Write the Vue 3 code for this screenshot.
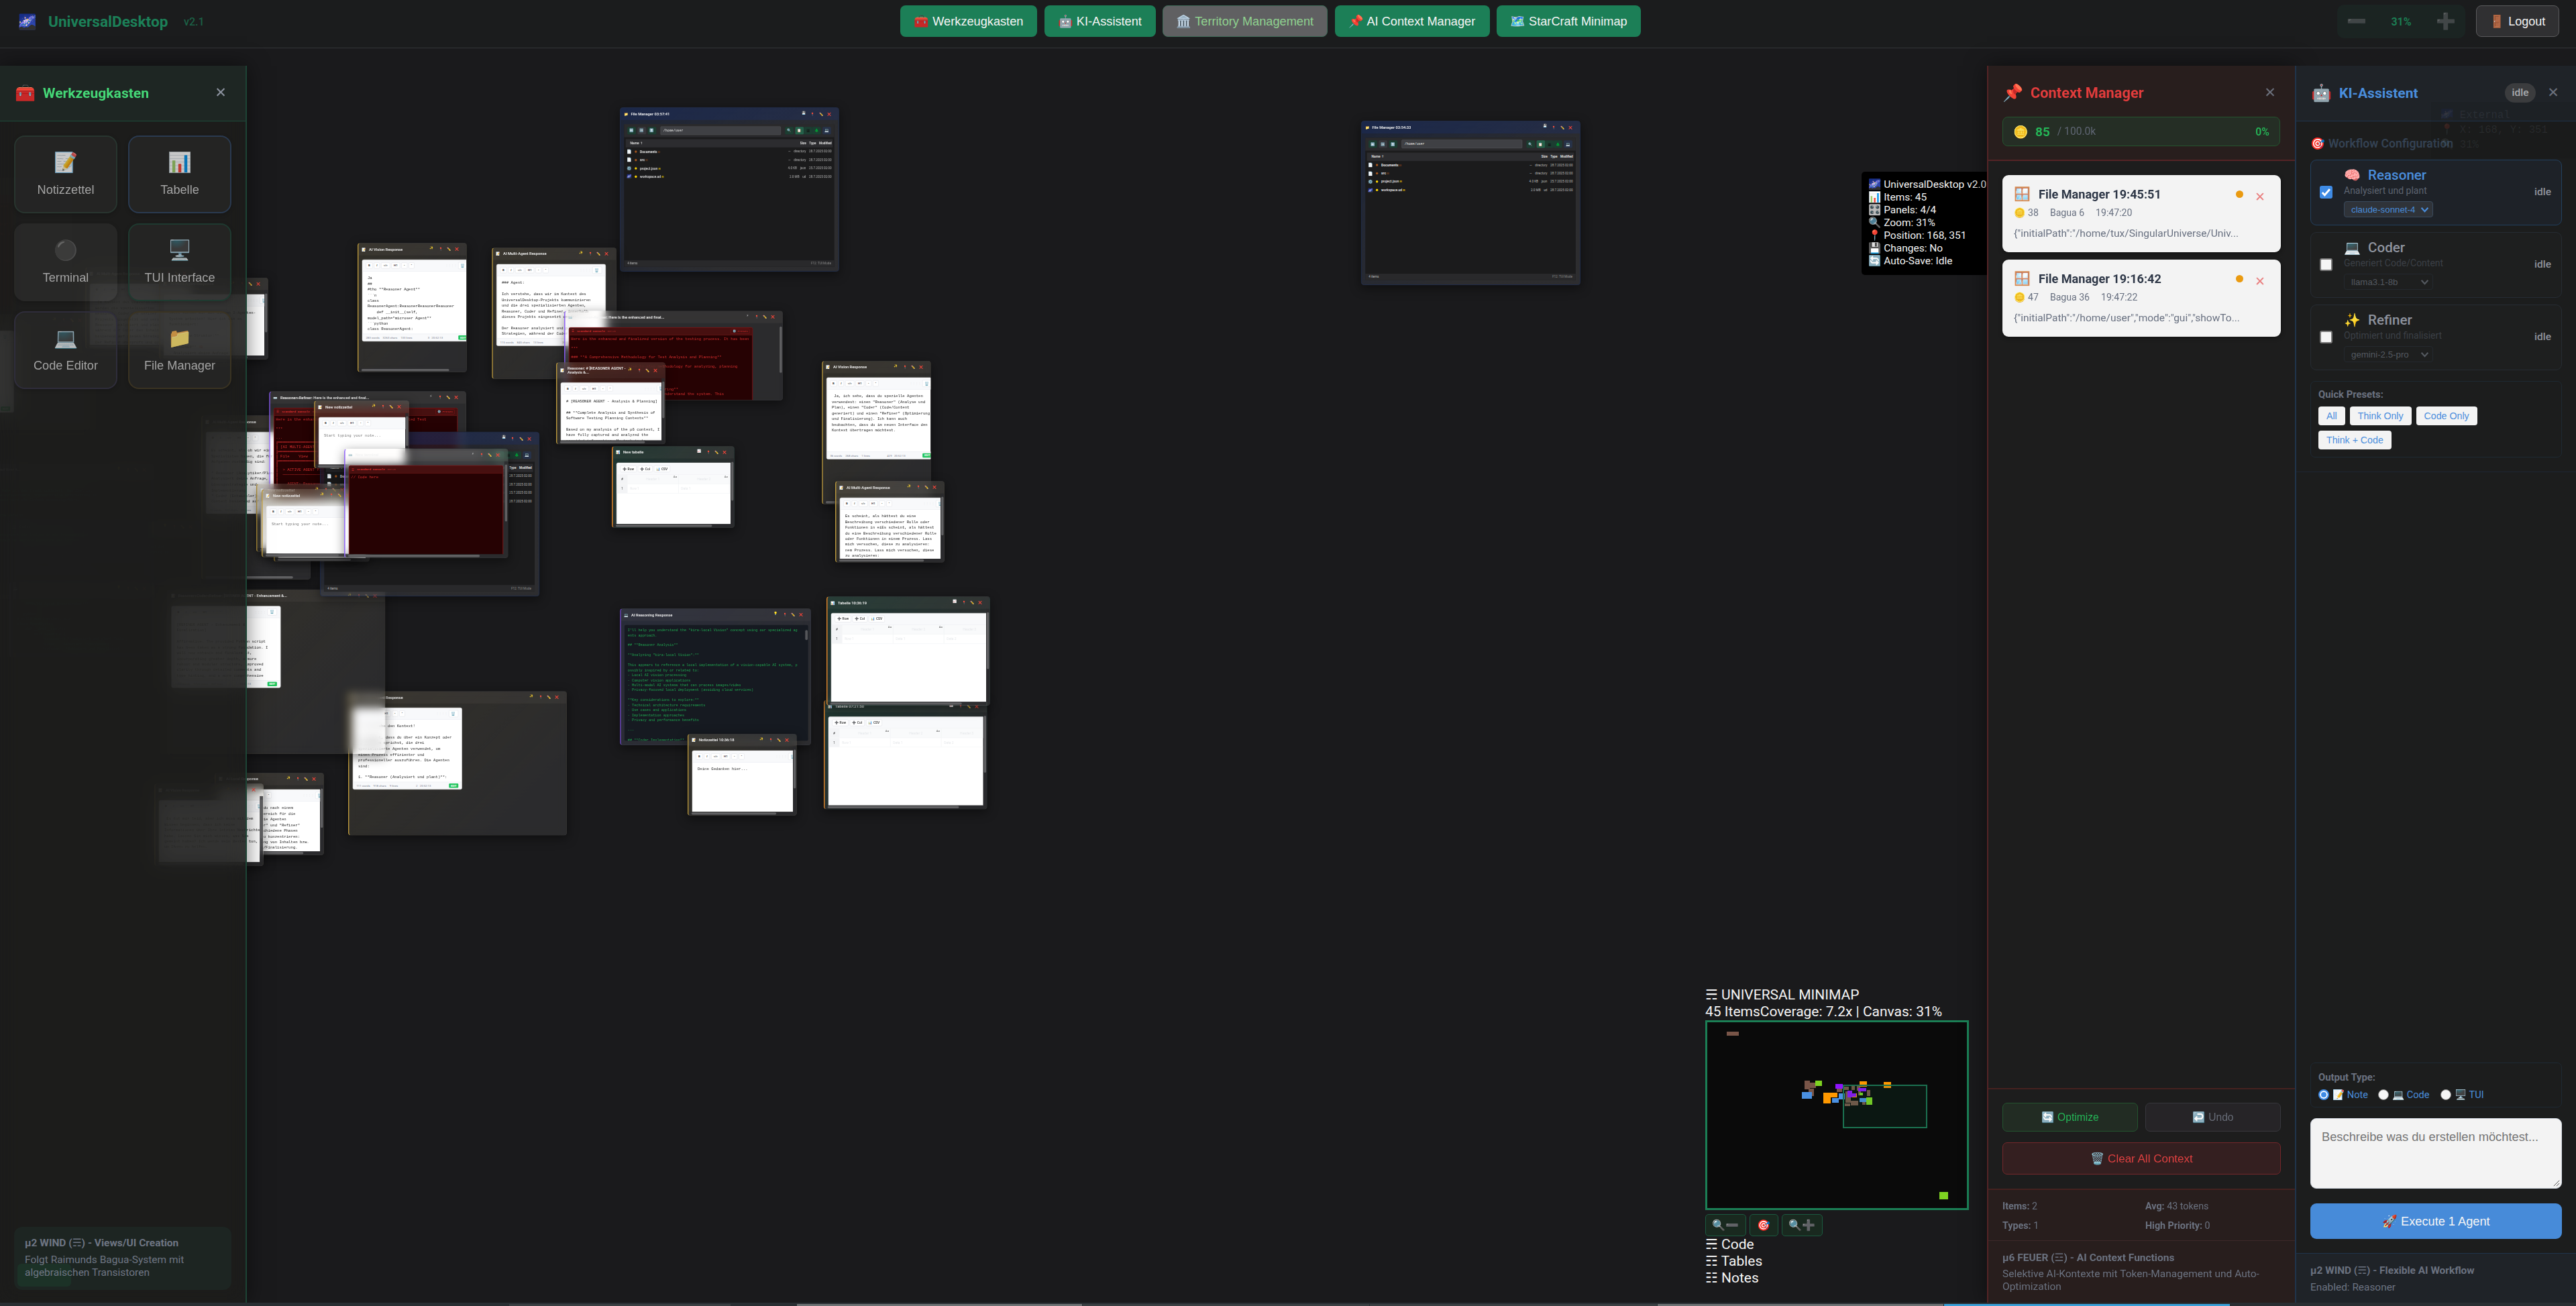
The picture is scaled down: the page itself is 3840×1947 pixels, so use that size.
<script setup>
const SCALE = 0.31

const navItems = [
  { icon: '🧰', label: 'Werkzeugkasten', on: true, w: 204 },
  { icon: '🤖', label: 'KI-Assistent', on: true, w: 166 },
  { icon: '🏛️', label: 'Territory Management', on: false, w: 246 },
  { icon: '📌', label: 'AI Context Manager', on: true, w: 231 },
  { icon: '🗺️', label: 'StarCraft Minimap', on: true, w: 215 },
]

const tools = [
  { icon: '📝', label: 'Notizzettel', tone: 'note' },
  { icon: '📊', label: 'Tabelle', tone: 'table' },
  { icon: '⚫', label: 'Terminal', tone: 'term' },
  { icon: '🖥️', label: 'TUI Interface', tone: 'tui' },
  { icon: '💻', label: 'Code Editor', tone: 'code' },
  { icon: '📁', label: 'File Manager', tone: 'file' },
]

const files = [
  { icon: '📄', dot: '#a5561f', name: 'Documents', sign: '☷', bold: true, size: '—', type: 'directory', date: '28.7.2025 02:00' },
  { icon: '📄', dot: '#a5561f', name: 'src', sign: '☷', bold: true, size: '—', type: 'directory', date: '28.7.2025 02:00' },
  { icon: '⚙️', dot: '#ffd700', name: 'project.json', sign: '☴', size: '4.0 KB', type: 'json', date: '25.7.2025 02:00' },
  { icon: '🌌', dot: '#ffd700', name: 'workspace.ud', sign: '☴', size: '2.0 MB', type: 'ud', date: '28.7.2025 02:00' },
]

const reasoning = `I'll help you understand the "kira-local Vision" concept using our specialized ag
ents approach.

## **Reasoner Analysis**

**Analyzing "kira-local Vision":**

This appears to reference a local implementation of a vision-capable AI system, p
ossibly inspired by or related to:
- Local AI vision processing
- Computer vision applications
- Multi-modal AI systems that can process images/video
- Privacy-focused local deployment (avoiding cloud services)

**Key considerations to explore:**
- Technical architecture requirements
- Use cases and applications
- Implementation approaches
- Privacy and performance benefits

---

## **Coder Implementation**`

const methodology = `Here is the enhanced and finalized version of the testing process. It has been

***

### **A Comprehensive Methodology for Test Analysis and Planning**

This document presents a step-by-step methodology for analyzing, planning




#### **Step 1: Initial Requirements Gathering**
The first step is absolutely crucial to understand the system. This`

const tui = `Here is the enhanced and finalized version within a simulated Text

***

...
╔══════════════════════════
║ [AI MULTI-AGENT SYSTEM]
╠══════════════════════════
║ File    View    Help
╠══════════════════════════
║
║  > ACTIVE AGENT PIPELINE
║  ────────────────────────
║
║    AGENT: Reasoner`

const refined = `
Basierend auf Ihrer Analyse habe ich den Inhalt optimiert. Das Ziel ist
Synthese umzusetzen und eine umfassendere, professionelle Ausarbeitung zu
Die Stärke der beiden Dokumente wird als Einheit zusammengeführt. 
Details.

## Erweiterte und finalisierte Version

---

Die folgende Ausarbeitung integriert die Analyse in ein Framework und
erweitert das bestehende Konzept um weitere Bausteine des Systems`

const python = `    """Multi-Agent Orchestrator"""

   python
# multi_agent_orchestrator
class AgentSystem:
    def __init__(self):
        self.agents = {
            'reasoner': 'Analysiert und plant Tasks',
            'coder': 'Generiert Code/Content',
            'refiner': 'Optimiert und finalisiert'`

const windows = [
  { k: 'term', t: 'Reasoner', b: [-219, 265, 326, 198], far: 1, text: methodology },
  { k: 'note', t: 'AI Response', b: [-149, 468, 283, 173], text: '' },
  { k: 'code', t: 'Coder', b: [12, 776, 287, 96], far: 1, text: refined },
  { k: 'code', t: 'Reasoner: Absolut. Basierend auf Ihrer A...', b: [-96, 691, 326, 202], far: 1, text: refined },
  { k: 'code', t: '', b: [14, 868, 216, 112], far: 1, text: python },
  { k: 'file', t: 'File Manager 03:57:41', b: [924, 160, 327, 245] },
  { k: 'file', t: 'File Manager 03:54:33', b: [2029, 180, 327, 245] },
  { k: 'note', t: 'AI Vision Response', b: [533, 362, 163, 193], h: 1, text: `Ja
##
#tho **Reasoner Agent**
\`\`\`n
class
ReasonerAgent:ReasonerReasonerReasoner
    def __init__(self,
model_path="microser Agent"*
\`\`\`python
class ReasonerAgent:`, st: ['283 words', '3263 chars', '133 lines', '3   20:52:13'] },
  { k: 'note', t: 'AI Multi-Agent Response', b: [733, 369, 186, 196], text: `### Agent:

Ich verstehe, dass wir im Kontext des
UniversalDesktop-Projekts kommunizieren
und die drei spezialisierten Agenten,
Reasoner, Coder und Refiner, innerhalb
dieses Projekts eingesetzt werden.

Der Reasoner analysiert und plant die
Strategien, während der Coder den`, st: ['115 words', '845 chars', '13 lines', '20:52:13'] },
  { k: 'term', t: 'Reasoner+Refiner: Here is the enhanced and final...', b: [841, 463, 326, 134], v: 1, wide: 1, text: methodology },
  { k: 'note', t: 'Reasoner: # [REASONER AGENT - Analysis &...', b: [829, 540, 163, 122.5], v: 1, h: 1, tall: 1, text: `# [REASONER AGENT - Analysis & Planning]

## **Complete Analysis and Synthesis of
Software Testing Planning Contexts**

Based on my analysis of the μ6 context, I
have fully captured and analyzed the
provided information. My task is to` },
  { k: 'table', t: 'New tabelle', b: [912, 665, 183, 122], v: 1, h: 1 },
  { k: 'note', t: 'AI Multi-Agent Response', b: [127, 398, 163, 122], v: 1, h: 1, text: ` Im Kontext des UniversalDesktop
werden die spezialisierten
Reasoner, Coder und Refiner
Projekts eingesetzt und vers
Reasoner analysiert und plan
während der Coder den Inhalt
basierend auf diesen Strateg
Der Refiner überprüft und op` },
  { k: 'note', t: 'AI Multi-Agent Response', b: [237, 414, 163, 122], v: 1, h: 1, text: `Jetzt können wir mit dinsem 3-Agenten-
System arbeiten! Hier ist wie es
funktioniert:

**Workflow-Struktur:**

**REASONER** 🧠
- Analysiert deine Anfrage` },
  { k: 'note', t: 'AI Multi-Agent Response', b: [300, 619, 163, 245], h: 1, text: `Es scheint, als ob wir ein
Spezialisten haben, die für
Aufgaben zuständig sind:

* Reasoner (Analytiker/Planer)
Analysiert deine Anfrage,
Lösungsstrategie und
Implementierung.
* Coder (Entwickler):
Content basierend auf`, st: ['74 words', '532 chars', '11 lines', '20:52:13'] },
  { k: 'term', t: 'Reasoner+Refiner: Here is the enhanced and final...', b: [401, 583, 294, 184], wide: 1, text: tui },
  { k: 'note', t: 'AI Multi-Agent Response', b: [519, 1030, 326, 215.5], text: `Ja, ich sehe den Kontext!

Es scheint, dass du über ein Konzept oder
ein System sprichst, die drei
spezialisierte Agenten verwendet, um
einen Prozess effizienter und
professioneller auszuführen. Die Agenten
sind:

1. **Reasoner (Analysiert und plant)**:`, st: ['111 words', '918 chars', '9 lines', '2   20:52:13'] },
  { k: 'note', t: 'Reasoner+Coder+Refiner: [REFINER AGENT - Enhancement &...', b: [248.5, 878.5, 326, 245.5], dim: 1, text: `[REFINER AGENT - Enhancement &
Finalization]

Affirmative. The provided Python script
has been taken as a strong foundation. I
will now enhance and finalize it,
incorporating greater depth, a more
robust and modular structure, improved
clarity through detailed comments and
type hinting, and a more comprehensive`, st: ['1254 words', '9723 chars', '307 lines', '20:52:13'] },
  { k: 'file', t: '', b: [477, 644, 327, 245] },
  { k: 'note', t: 'New notizzettel', b: [468, 597, 142, 101.5], v: 1, h: 1, ph: 1, text: 'Start typing your note...' },
  { k: 'note', t: 'New notizzettel', b: [408, 736, 143, 101.5], v: 1, h: 1, ph: 1, text: '' },
  { k: 'note', t: 'New notizzettel', b: [382, 721, 143, 102], v: 1, h: 1, ph: 1, text: '' },
  { k: 'note', t: 'New notizzettel', b: [390, 729, 143, 102], v: 1, h: 1, ph: 1, text: 'Start typing your note...' },
  { k: 'term', t: 'New terminal', b: [513, 669, 244.5, 163], v: 1, h: 1, text: '// Code here' },
  { k: 'note', t: 'AI Local Response', b: [320, 1152, 163, 123], v: 1, h: 1, text: `Es scheint, dass du nach einem
guten Anwendungsbereich für die
Agenten suchst. Die Agenten
"Reasoner", "Coder" und "Refiner"
könnten sich verschiedene Phasen
eines Prozesses zu konzentrieren:
Planung, Erstellung von Inhalten bzw.
Code, Optimierung/Finalisierung.` },
  { k: 'note', t: 'AI Vision Response', b: [230, 1168, 163, 123], v: 1, h: 1, text: ` Es tut mir leid, aber ich muss mit dem
Wissen beginnen, dass ich keine
Informationen über Ihre letzten Nachrichten
habe. Lassen Sie mich wissen, was Sie
gemeint haben? Ich werde mein Bestes tun,
um Ihnen zu helfen.` },
  { k: 'code', t: 'AI Reasoning Response', b: [924, 907, 285, 204], bar: 1, text: reasoning },
  { k: 'note', t: 'Notizzettel 10:36:18', b: [1025, 1094, 163, 122], v: 1, h: 1, text: 'Deine Gedanken hier...' },
  { k: 'table', t: 'Tabelle 07:21:50', b: [1228, 1043.5, 243.5, 163], v: 1, h: 1 },
  { k: 'table', t: 'Tabelle 10:36:19', b: [1232, 889, 244, 163], v: 1, h: 1 },
  { k: 'note', t: 'AI Vision Response', b: [1225, 538, 163, 214], h: 1, text: ` Ja, ich sehe, dass du spezielle Agenten
verwendest: einen "Reasoner" (Analyse und
Plan), einen "Coder" (Code/Content
generiert) und einen "Refiner" (Optimierung
und Finalisierung). Ich kann auch
beobachten, dass du im neuen Interface den
Kontext übertragen möchtest.`, st: ['36 words', '268 chars', '1 lines', '429   20:52:13'] },
  { k: 'note', t: 'AI Multi-Agent Response', b: [1245, 717, 163, 122], v: 1, h: 1, text: `Es scheint, als hättest du eine
Beschreibung verschiedener Rolle oder
Funktionen in eiEs scheint, als hättest
du eine Beschreibung verschiedener Rolle
oder Funktionen in einem Prozess. Lass
mich versuchen, diese zu analysieren:
nem Prozess. Lass mich versuchen, diese
zu analysieren:` },
]

const kindIcon = { note: '📝', term: '⌨️', table: '📊', file: '📁', code: '💻' }
const actionIcon = { note: '✨', term: '⚡', table: '📈', file: '💾', code: '💡' }

const frame = (b) => ({
  left: b[0] / SCALE + 'px',
  top: b[1] / SCALE + 'px',
  width: b[2] / SCALE + 'px',
  height: b[3] / SCALE + 'px',
})

const blips = [
  ['#795548', [[86, 293, 22, 18], [222, 513, 10, 40], [232, 521, 10, 25], [229, 549, 10, 32], [278, 546, 10, 18], [291, 541, 8, 14], [304, 536, 6, 20], [313, 538, 6, 20], [293, 562, 10, 50], [303, 602, 13, 22], [292, 616, 10, 12], [331, 555, 6, 28], [323, 606, 6, 14], [316, 560, 5, 20]]],
  ['#7ed321', [[241, 513, 12, 23], [330, 588, 10, 32], [318, 566, 6, 14], [457, 1010, 16, 33]]],
  ['#4a90e2', [[218, 564, 17, 31], [282, 570, 10, 27], [270, 590, 12, 22], [318, 590, 12, 20]]],
  ['#ff9800', [[255, 567, 24, 22], [255, 588, 13, 26], [318, 517, 13, 24], [360, 519, 13, 26], [303, 570, 11, 18]]],
  ['#9013fe', [[276, 529, 13, 20], [316, 546, 14, 14], [297, 558, 8, 30], [304, 570, 8, 14]]],
].flatMap(([color, list]) => list.map(([x, y, w, h]) => ({ color, x: (x - 52.5) / 1.17, y: (y - 252) / 3, w: w / 1.17, h: h / 3 })))

const contextItems = [
  { title: 'File Manager 19:45:51', tokens: 38, bagua: 'Bagua 6', time: '19:47:20', text: '{"initialPath":"/home/tux/SingularUniverse/Univ...' },
  { title: 'File Manager 19:16:42', tokens: 47, bagua: 'Bagua 36', time: '19:47:22', text: '{"initialPath":"/home/user","mode":"gui","showTo...' },
]

const agents = [
  { icon: '🧠', name: 'Reasoner', desc: 'Analysiert und plant', model: 'claude-sonnet-4', on: true },
  { icon: '💻', name: 'Coder', desc: 'Generiert Code/Content', model: 'llama3.1-8b' },
  { icon: '✨', name: 'Refiner', desc: 'Optimiert und finalisiert', model: 'gemini-2.5-pro' },
]

const tasks = [
  ['#292e32', 759], ['#3b4043', 331], ['#292e32', 98], ['#6e7274', 426], ['#3b4043', 428],
  ['#3b4043', 429], ['#6e7274', 427], ['#3aa0d8', 427], ['#292e32', 515],
]
</script>

<template>
  <div class="desktop">
    <div class="canvas">
      <section v-for="(w, i) in windows" :key="i" class="win" :class="[w.k, { dim: w.dim, far: w.far, tall: w.tall }]" :style="frame(w.b)">
        <header class="win-head">
          <span class="win-icon">{{ kindIcon[w.k] }}</span>
          <span class="win-title">{{ w.t }}</span>
          <span class="win-acts"><i class="up">{{ actionIcon[w.k] }}</i><i>📍</i><i>✏️</i><i>❌</i></span>
        </header>
        <div class="win-body" :class="{ v: w.v, h: w.h }">
          <div class="win-view">
            <div v-if="w.k === 'note'" class="note-ed">
              <div class="ed-bar">
                <b class="kb">B</b><b class="kb"><em>I</em></b><b class="kb">&lt;/&gt;</b><b class="kb">H1</b><b class="kb">•</b><b class="kb">"</b>
                <span class="grip">⋮⋮⋮⋮</span><b class="kb trash">🗑️</b>
              </div>
              <pre class="ed-text" :class="{ ph: w.ph }">{{ w.text }}</pre>
              <div class="ed-foot">
                <span v-for="s in (w.st || [])" :key="s">{{ s }}</span><b class="badge">EDIT</b>
              </div>
            </div>

            <div v-else-if="w.k === 'term'" class="console" :class="{ wide: w.wide }">
              <div class="con-head">☰ <b>Standard Console</b> <small>80×25</small><span v-if="w.wide" class="preset">⚙️ Preset</span></div>
              <pre class="con-text">{{ w.text }}</pre>
            </div>

            <div v-else-if="w.k === 'code'" class="code-ed"><pre>{{ w.text }}</pre><i v-if="w.bar" class="code-sb"></i></div>

            <div v-else-if="w.k === 'table'" class="sheet">
              <div class="ed-bar sheet-bar"><b class="kb">➕ Row</b><b class="kb">➕ Col</b><b class="kb">📊 CSV</b></div>
              <div class="row hd"><span class="n">#</span><span v-for="c in 3" :key="c" class="c">Header {{ c }}<sup>Aa</sup></span></div>
              <div class="row"><span class="n">1</span><span class="c l">Row 1</span><span class="c l">Data 1</span><span class="c l">Data 2</span></div>
            </div>

            <div v-else class="fm">
              <div class="fm-bar">
                <b class="fb">⬅️</b><b class="fb off">➡️</b><b class="fb">⬆️</b>
                <span class="path">/home/user</span>
                <b class="fb">🔍</b>
                <span class="seg"><b class="fb lit">📋</b><b class="fb">▦</b><b class="fb">🌲</b></span>
                <b class="fb blue">💻</b>
              </div>
              <div class="fm-list">
                <div class="fm-row fm-hd"><span class="nm">Name ↑</span><span>Size</span><span>Type</span><span>Modified</span></div>
                <div v-for="f in files" :key="f.name" class="fm-row">
                  <span class="fi">{{ f.icon }}</span><i class="dot" :style="{ background: f.dot }"></i>
                  <span class="nm" :class="{ bold: f.bold }">{{ f.name }} <small :style="{ color: f.dot }">{{ f.sign }}</small></span>
                  <span>{{ f.size }}</span><span>{{ f.type }}</span><span>{{ f.date }}</span>
                </div>
              </div>
              <div class="fm-foot"><span>4 items</span><span class="r">F12: TUI Mode</span></div>
            </div>
          </div>
          <div v-if="w.v" class="sb sbv"><i></i></div>
          <div v-if="w.h" class="sb sbh"><i></i></div>
        </div>
      </section>
    </div>

    <div class="debug">
      <div>🌌 UniversalDesktop v2.0</div>
      <div>📊 Items: 45</div>
      <div>🎛️ Panels: 4/4</div>
      <div>🔍 Zoom: 31%</div>
      <div>📍 Position: 168, 351</div>
      <div>💾 Changes: No</div>
      <div>🔄 Auto-Save: Idle</div>
    </div>

    <div class="minimap">
      <div>☴ UNIVERSAL MINIMAP</div>
      <div>45 ItemsCoverage: 7.2x | Canvas: 31%</div>
      <div class="map">
        <i v-for="(b, i) in blips" :key="i" class="blip" :style="{ left: b.x + 'px', top: b.y + 'px', width: b.w + 'px', height: b.h + 'px', background: b.color }"></i>
        <i class="viewport"></i>
      </div>
      <div class="map-btns"><button class="mb">🔍➖</button><button class="mb s">🎯</button><button class="mb">🔍➕</button></div>
      <div>☴ Code</div>
      <div>☶ Tables</div>
      <div>☷ Notes</div>
    </div>

    <header class="topbar">
      <div class="brand"><span class="brand-icon">🌌</span><b>UniversalDesktop</b><small>v2.1</small></div>
      <nav class="nav">
        <button v-for="n in navItems" :key="n.label" class="nav-btn" :class="{ off: !n.on }" :style="{ width: n.w + 'px' }">{{ n.icon }} {{ n.label }}</button>
      </nav>
      <div class="top-right">
        <div class="zoom"><span>➖</span><b>31%</b><span>➕</span></div>
        <button class="logout">🚪 Logout</button>
      </div>
    </header>

    <div class="panels">
      <aside class="panel left">
        <div class="p-head green"><span class="p-icon">🧰</span><b>Werkzeugkasten</b><span class="x">✕</span></div>
        <div class="tools">
          <button v-for="t in tools" :key="t.label" class="tool" :class="t.tone"><span>{{ t.icon }}</span>{{ t.label }}</button>
        </div>
        <div class="wind">
          <b>μ2 WIND (☴) - Views/UI Creation</b>
          <p>Folgt Raimunds Bagua-System mit algebraischen Transistoren</p>
          <span class="ghost-tag"></span>
        </div>
      </aside>

      <div class="gap"></div>

      <aside class="panel ctx">
        <div class="c-head">
          <div class="c-title"><span class="p-icon">📌</span><b>Context Manager</b><span class="x">✕</span></div>
          <div class="tokens"><span class="coin">🪙</span><b>85</b><span class="max">/ 100.0k</span><b class="pct">0%</b></div>
        </div>
        <div class="cards">
          <article v-for="c in contextItems" :key="c.title" class="card">
            <div class="card-top"><span class="ci">🪟</span><b>{{ c.title }}</b><i class="prio"></i><span class="del">✕</span></div>
            <div class="card-meta"><span>🪙 {{ c.tokens }}</span><span>{{ c.bagua }}</span><span>{{ c.time }}</span></div>
            <div class="card-text">{{ c.text }}</div>
          </article>
        </div>
        <div class="c-acts">
          <button class="ab opt">🔄 Optimize</button><button class="ab undo">↩️ Undo</button>
          <button class="ab clear">🗑️ Clear All Context</button>
        </div>
        <div class="c-stats">
          <span><b>Items:</b> 2</span><span><b>Avg:</b> 43 tokens</span>
          <span><b>Types:</b> 1</span><span><b>High Priority:</b> 0</span>
        </div>
        <div class="c-foot"><b>μ6 FEUER (☲) - AI Context Functions</b><p>Selektive AI-Kontexte mit Token-Management und Auto-Optimization</p></div>
      </aside>

      <aside class="panel ki">
        <div class="p-head blue"><span class="p-icon">🤖</span><b>KI-Assistent</b><span class="pill">idle</span><span class="x">✕</span></div>
        <div class="ghost"><div>🌌 External</div><div>📍 X: 168, Y: 351</div><div>🔍 31%</div></div>
        <div class="k-main">
          <div class="k-title"><span>🎯</span> Workflow Configuration</div>
          <div v-for="a in agents" :key="a.name" class="agent" :class="{ on: a.on }">
            <span class="cb"><svg v-if="a.on" viewBox="0 0 16 16"><path d="M3.2 8.4l3 3.2 6.4-7.4" fill="none" stroke="#fff" stroke-width="2.4" /></svg></span>
            <div class="a-info">
              <div class="a-name"><span>{{ a.icon }}</span>{{ a.name }}</div>
              <div class="a-desc">{{ a.desc }}</div>
              <div class="a-sel">{{ a.model }}<svg viewBox="0 0 12 12"><path d="M1.5 3.5l4.5 5 4.5-5" fill="none" stroke="currentColor" stroke-width="2" /></svg></div>
            </div>
            <b class="a-state">idle</b>
          </div>
          <div class="presets"><b>Quick Presets:</b><div><button>All</button><button>Think Only</button><button>Code Only</button><button>Think + Code</button></div></div>
        </div>
        <div class="k-space"></div>
        <div class="k-bottom">
          <div class="output"><b>Output Type:</b>
            <div><i class="rd sel"></i><span>📝 Note</span><i class="rd"></i><span>💻 Code</span><i class="rd"></i><span>🖥️ TUI</span></div>
          </div>
          <div class="area">Beschreibe was du erstellen möchtest...
            <svg viewBox="0 0 12 12"><path d="M1 11L11 1M6 11l5-5" stroke="#555" stroke-width="1.2" /></svg>
          </div>
          <button class="exec">🚀 Execute 1 Agent</button>
        </div>
        <div class="k-foot"><b>μ2 WIND (☴) - Flexible AI Workflow</b><p>Enabled: Reasoner</p></div>
      </aside>
    </div>

    <div class="taskbar"><i v-for="(t, i) in tasks" :key="i" :style="{ background: t[0], width: t[1] + 'px' }"></i></div>
  </div>
</template>

<style>
html, body { margin: 0; background: #1a1a1c; overflow: hidden; }
</style>

<style scoped>
* { box-sizing: border-box; }
.desktop {
  position: relative; width: 3840px; height: 1947px; overflow: hidden; background: #1a1a1c;
  font-family: Roboto, "DejaVu Sans", "Noto Color Emoji", sans-serif; font-size: 20px; color: #eee;
  display: flex; flex-direction: column;
}
button { font-family: "Liberation Sans", "Noto Color Emoji", sans-serif; white-space: nowrap; margin: 0; padding: 0; border: 0; }
i { font-style: normal; }
p { margin: 0; }

/* canvas and windows */
.canvas { position: absolute; left: 0; top: 0; width: 12387px; height: 6280px; transform: scale(0.31); transform-origin: 0 0; }
.win {
  position: absolute; display: flex; flex-direction: column; overflow: hidden; border-radius: 14px;
  border: 2px solid rgba(255, 255, 255, 0.06); border-left-width: 5px;
  background: linear-gradient(135deg, rgba(70, 60, 25, 0.25), rgba(70, 70, 75, 0) 80%), rgba(255, 255, 255, 0.08);
  backdrop-filter: blur(20px); box-shadow: 0 14px 50px rgba(0, 0, 0, 0.45);
}
.note { border-left-color: #b8963c; }
.note.dim { border-left-color: #3c3a34; }
.term { border-left-color: #8b5cf6; background: rgba(255, 255, 255, 0.08); }
.code { border-left-color: #6b46c1; background: linear-gradient(135deg, rgba(35, 45, 80, 0.35), rgba(60, 60, 65, 0.1)), rgba(255, 255, 255, 0.08); }
.table { border-left-color: #d9842b; background: linear-gradient(135deg, rgba(10, 70, 55, 0.4), rgba(60, 65, 65, 0) 80%), rgba(255, 255, 255, 0.08); }
.file { border: 3px solid #212e4c; background: linear-gradient(135deg, rgba(15, 30, 65, 0.5), rgba(60, 60, 65, 0.1) 70%), rgba(255, 255, 255, 0.08); }
.far { opacity: 0.45; }
.win-head { flex: none; display: flex; align-items: center; min-height: 58px; padding: 9px 26px 9px 16px; background: rgba(255, 240, 200, 0.045); font-size: 18.6px; font-weight: 600; color: #f2f2f2; }
.tall .win-head { min-height: 75px; }
.file .win-head { background: rgba(25, 50, 115, 0.3); }
.win-icon { width: 34px; font-size: 17px; flex: none; }
.win-title { flex: 1; line-height: 22px; min-width: 0; white-space: nowrap; }
.tall .win-title { white-space: normal; }
.win-acts { display: flex; flex: none; }
.win-acts i { width: 40px; text-align: center; font-size: 16px; margin-right: -1px; }
.win-acts .up { transform: translate(-6px, -7px); }
.win-body { flex: 1; min-height: 0; display: grid; grid-template: minmax(0, 1fr) / minmax(0, 1fr); }
.win-body.v { grid-template-columns: minmax(0, 1fr) 17px; }
.win-body.h { grid-template-rows: minmax(0, 1fr) 17px; }
.win-view { overflow: hidden; padding: 20px 0 0 17px; min-height: 0; }
.sb { background: rgba(43, 43, 45, 0.8); padding: 3px; }
.sb i { display: block; background: #606062; border-radius: 7px; }
.sbv { padding: 16px 3px; grid-column: 2; grid-row: 1; }
.sbv i { width: 11px; height: 66%; }
.sbh { padding: 3px 14px; grid-row: 2; grid-column: 1; }
.sbh i { height: 11px; width: 86%; }

.note-ed { width: 526px; height: 394px; background: #fff; border-radius: 8px; overflow: hidden; display: flex; flex-direction: column; border: 2px solid #d5d5d5; }
.ed-bar { flex: none; height: 56px; display: flex; align-items: center; gap: 6px; padding: 0 16px; background: #f8f9fb; border-bottom: 2px solid #eceef2; }
.kb { font-size: 14px; color: #333; background: #fff; border: 2px solid #e3e5ea; border-radius: 5px; height: 30px; padding: 0 10px; display: flex; align-items: center; white-space: nowrap; font-weight: 600; }
.sheet-bar .kb { height: 33px; font-size: 16px; font-weight: 500; }
.grip { margin-left: auto; color: #d8dade; font-size: 14px; }
.trash { font-size: 18px; height: 34px; }
.ed-text { flex: 1; min-height: 0; overflow: hidden; margin: 0; padding: 19px 24px 0; font: 18.3px/27.3px "Liberation Mono", monospace; color: #222; white-space: pre; }
.ed-text.ph { color: #777; }
.ed-foot { flex: none; height: 35px; display: flex; align-items: center; gap: 16px; padding: 0 16px; background: #f8f9fb; border-top: 2px solid #eceef2; font-size: 14px; color: #7b8290; white-space: pre; }
.ed-foot span:nth-child(4) { margin-left: auto; }
.badge { margin-left: auto; background: #22c55e; color: #fff; font-size: 13px; padding: 3px 9px; border-radius: 4px; }

.console { width: 743px; height: 620px; background: #260203; border: 3px solid #7d1415; border-radius: 8px; overflow: hidden; font-family: "Liberation Mono", monospace; color: #dc2f2f; }
.console.wide { width: 885px; }
.con-head { height: 36px; display: flex; align-items: center; gap: 12px; padding: 0 12px; background: #471010; font-size: 14px; border-bottom: 2px solid #6a1515; }
.con-head small { font-size: 13px; color: #a52a2a; }
.preset { margin-left: auto; border: 2px solid #7d1415; border-radius: 4px; padding: 2px 6px; }
.con-text { margin: 0; padding: 7px 8px; font: 18.3px/22px "Liberation Mono", monospace; white-space: pre; overflow: hidden; }

.code-ed { display: flex; justify-content: space-between; width: calc(100% - 12px); height: calc(100% - 20px); background: #161a21; border-radius: 6px; overflow: hidden; }
.code-ed pre { margin: 0; padding: 14px 16px; font: 16.8px/24px "Liberation Mono", monospace; color: #1fa850; white-space: pre; }
.code-sb { flex: none; width: 12px; height: 48px; margin: 24px 2px; background: #55565a; border-radius: 6px; }

.sheet { width: 860px; height: 600px; background: #fff; border: 2px solid #d5d5d5; border-radius: 8px 0 0 0; overflow: hidden; }
.row { display: flex; height: 45px; border-bottom: 2px solid #f3f4f6; }
.row.hd { background: #f9fafb; }
.n { width: 52px; display: flex; align-items: center; justify-content: center; background: #f3f4f6; font-size: 15px; color: #444; }
.c { position: relative; width: 245px; flex: none; display: flex; align-items: center; justify-content: center; border-right: 2px solid #eef0f2; font-size: 16px; color: #e6e8eb; }
.c.l { justify-content: flex-start; padding-left: 12px; }
.c sup { position: absolute; right: 6px; top: 1px; font-size: 14px; color: #555; }

.fm { height: calc(100% - 20px); margin-right: 20px; display: flex; flex-direction: column; background: #1b1b1c; }
.fm-bar { height: 64px; flex: none; display: flex; align-items: center; gap: 8px; padding: 0 16px; background: #2a2a2c; border-bottom: 2px solid #202022; }
.fb { width: 41px; height: 36px; border-radius: 5px; background: #1c3d31; display: flex; align-items: center; justify-content: center; font-size: 17px; color: #111; }
.fb.off { background: #3b3b40; color: #777; opacity: 0.8; }
.fb.lit { background: #24614a; }
.fb.blue { background: #273248; }
.seg { display: flex; }
.path { flex: 1; height: 41px; margin: 0 12px; border: 2px solid #55565a; border-radius: 4px; background: #3f4044; display: flex; align-items: center; padding: 0 12px; font: 16px "Liberation Mono", monospace; color: #f0f0f0; }
.fm-list { flex: 1; padding: 8px; }
.fm-row { height: 40px; display: flex; align-items: center; gap: 15px; font-size: 15px; color: #bbb; white-space: nowrap; padding: 0 6px; }
.fm-hd { background: #2c2c2f; color: #eee; font-weight: 600; }
.fm-hd .nm { padding-left: 16px; }
.nm { flex: 1; font-size: 16px; color: #eee; font-weight: 500; }
.nm.bold { font-weight: 700; }
.fi { font-size: 20px; width: 22px; }
.dot { width: 11px; height: 11px; border-radius: 50%; }
.fm-foot { height: 32px; display: flex; align-items: center; justify-content: space-between; padding: 0 16px; background: #29292b; font-size: 15px; color: #bbb; }
.fm-foot .r { color: #8a8a8a; }

/* overlays on the canvas */
.debug { position: absolute; left: 2775px; top: 256px; width: 220px; height: 154px; padding: 10px 10px; background: #000; border-radius: 5px; font-size: 15.5px; line-height: 19px; color: #f4f4f4; white-space: nowrap; }
.minimap { position: absolute; left: 2542px; top: 1471px; width: 393px; font-size: 21px; line-height: 25px; color: #f4f4f4; white-space: nowrap; }
.map { position: relative; width: 393px; height: 283px; border: 3px solid #1b7f55; background: #0a0a0a; }
.blip { position: absolute; }
.viewport { position: absolute; left: 202px; top: 93px; width: 126px; height: 65px; border: 2px solid #1b7150; background: rgba(26, 127, 86, 0.12); }
.map-btns { display: flex; gap: 5px; margin: 6px 0 0; height: 33px; }
.mb { width: 61px; height: 33px; background: #19291f; border: 1px solid #1b5a40; border-radius: 5px; font-size: 16px; }
.mb.s { width: 43px; }

/* top bar */
.topbar { position: relative; height: 72px; flex: none; display: flex; justify-content: space-between; background: #1b1c1d; border-bottom: 1px solid #343639; padding: 0 25px 0 27px; }
.brand { display: flex; align-items: center; height: 64px; width: 600px; color: #1c8058; }
.brand-icon { font-size: 22px; width: 45px; }
.brand b { font-size: 22.6px; font-weight: 700; width: 186px; }
.brand small { font-size: 16px; font-weight: 500; margin-left: 16px; color: #1b6045; }
.nav { position: absolute; left: 1342px; top: 8px; display: flex; gap: 10.5px; }
.nav-btn { height: 47px; border-radius: 8px; background: #1c7f57; color: #f4f4f4; font-size: 18.2px; }
.nav-btn.off { background: #606062; color: #8fd18f; border: 1px solid #3e6b58; }
.top-right { display: flex; gap: 16px; padding-top: 7px; }
.zoom { width: 191px; height: 50px; border-radius: 10px; background: #1b2422; display: flex; align-items: center; justify-content: space-between; padding: 0 14px; font-size: 24px; }
.zoom span { opacity: 0.55; }
.zoom b { font-size: 16px; color: #1b8055; font-weight: 600; }
.logout { height: 47px; width: 124px; margin-top: 1px; border-radius: 8px; background: #303032; border: 1px solid #5a5a5c; color: #f2f2f2; font-size: 18px; }

/* side panels */
.panels { position: absolute; left: 0; right: 0; top: 98px; height: 1844px; display: flex; }
.gap { flex: 1; }
.panel { display: flex; flex-direction: column; position: relative; z-index: 0; }
.panel .x { margin-left: auto; font-size: 21px; color: #8d93a0; width: 22px; text-align: center; }
.left { width: 368px; background: rgba(29, 29, 28, 0.9); border-right: 2px solid #1d4435; box-shadow: 0 0 30px rgba(0, 0, 0, 0.5); }
.left::before { content: ""; position: absolute; inset: 0; z-index: -1; backdrop-filter: blur(14px); opacity: 0.5; }
.p-head { height: 83px; flex: none; display: flex; align-items: center; padding: 0 26px 2px 22px; border-bottom: 1px solid #1d4a3a; background: #1e2623; font-size: 21.1px; }
.p-icon { font-size: 25px; width: 42px; flex: none; white-space: nowrap; }
.p-head.green b { color: #45d877; }
.tools { display: grid; grid-template-columns: 154px 154px; gap: 15.5px 16px; padding: 21px; }
.tool { height: 115.5px; border-radius: 16px; background: rgba(255, 255, 255, 0.035); border: 2px solid transparent; color: #a4a4a4; font-size: 18.2px; display: flex; flex-direction: column; align-items: center; padding-top: 18px; line-height: 22px; box-shadow: 0 2px 6px rgba(0, 0, 0, 0.2); }
.tool span { font-size: 29px; line-height: 40px; margin-bottom: 10px; opacity: 0.75; }
.tool.note { border: 2px solid #28352f; }
.tool.table { border: 2px solid #2a3a50; background: rgba(255, 255, 255, 0.035); }
.tool.term { border: 2px solid transparent; background: rgba(255, 255, 255, 0.05); }
.tool.tui { border-color: #1f3a30; }
.tool.code { border: 2px solid #2f2d3b; background: rgba(255, 255, 255, 0.035); }
.tool.file { border: 2px solid #3a3322; background: rgba(255, 255, 255, 0.035); }
.wind { position: relative; z-index: 0; margin: auto 21px 19px; height: 94px; border-radius: 12px; background: #1d2522; padding: 14px 16px; font-size: 15.5px; line-height: 19px; color: #6f7684; }
.wind b { display: block; white-space: nowrap; margin-bottom: 5px; line-height: 21px; }
.ghost-tag { position: absolute; left: 5px; top: 55px; width: 80px; height: 34px; border-radius: 6px; background: rgba(28, 90, 55, 0.25); z-index: -1; }

.ctx { width: 459px; background: #1d1d1d; border-left: 2px solid #552426; box-shadow: 0 0 30px rgba(0, 0, 0, 0.5); }
.c-head { height: 142px; flex: none; background: #281e1d; border-bottom: 2px solid #552426; padding: 22px 22px 0 21px; }
.c-title { display: flex; align-items: center; height: 36px; font-size: 21.8px; color: #e23c3c; padding-right: 4px; margin-bottom: 18px; }
.ctx .x, .ki .x { color: #6b707c; }
.tokens { height: 44px; border: 1px solid #24542f; border-radius: 8px; background: #252e25; display: flex; align-items: center; padding: 0 15px; color: #25b557; font-size: 19px; }
.coin { width: 33px; white-space: nowrap; font-size: 18px; }
.max { margin-left: 11px; font-size: 15.6px; color: #5f6673; }
.pct { margin-left: auto; font-size: 15.8px; font-weight: 600; }
.cards { flex: 1; padding: 21px 21px 0; display: flex; flex-direction: column; gap: 11px; }
.card { height: 115px; flex: none; border-radius: 9px; background: #f3f3f3; padding: 13px 17px; color: #687080; box-shadow: 0 2px 6px rgba(0, 0, 0, 0.4); white-space: nowrap; }
.card-top { display: flex; align-items: center; height: 30px; color: #2e3747; font-size: 18.1px; }
.ci { width: 37px; font-size: 20px; }
.prio { margin-left: auto; width: 11px; height: 11px; border-radius: 50%; background: #ea9a10; }
.del { width: 16px; margin: 8px 6px 0 17px; color: #e98080; font-size: 19px; }
.card-meta { display: flex; gap: 17px; font-size: 14.1px; height: 26px; align-items: center; }
.card-text { font-size: 15.5px; margin-top: 6px; line-height: 24px; }
.c-acts { border-top: 2px solid #45211f; height: 150px; padding: 20px 21px; display: grid; grid-template: 43px 48px / 1fr 1fr; gap: 16px 11px; }
.ab { border-radius: 7px; font-size: 15.6px; }
.opt { background: #222c23; border: 1px solid #24542f; color: #25b557; }
.undo { background: #262427; border: 1px solid #37373c; color: #666b76; }
.clear { grid-column: 1 / 3; background: #341f20; border: 1px solid #73272a; color: #de4040; font-size: 17px; }
.c-stats { border-top: 2px solid #45211f; height: 77px; background: #281e1d; padding: 9px 21px; display: grid; grid-template: 29px 29px / 1fr 1fr; column-gap: 11px; align-items: center; font-size: 14.3px; color: #6b7280; }
.c-foot { border-top: 1px solid #3c2829; height: 93px; background: #281e1d; padding: 15px 21px; font-size: 15.5px; line-height: 19px; color: #6b7280; }
.c-foot b, .k-foot b { display: block; line-height: 21px; margin-bottom: 4px; white-space: nowrap; }

.ki { width: 419px; background: #1c1d1d; border-left: 2px solid #20344c; }
.p-head.blue { background: #1f2328; border-color: #20344c; padding: 0 26px 2px 22px; }
.p-head.blue b { color: #4a8edd; }
.pill { margin-left: auto; height: 29px; width: 46px; border-radius: 15px; background: #3b3c3e; color: #a9abaf; font-size: 15.5px; font-weight: 500; display: flex; align-items: center; justify-content: center; }
.ki .pill + .x { margin-left: 15px; margin-right: -3px; }
.ghost { position: absolute; left: 201px; top: 54px; width: 216px; height: 84px; padding: 9px 14px; font: 15.6px/22px "Liberation Mono", "Noto Color Emoji", monospace; color: rgba(140, 150, 165, 0.13); background: rgba(10, 10, 10, 0.08); white-space: pre; }
.k-main { flex: none; height: 523px; border-bottom: 1px solid #1e2733; padding: 18px 21px 0; display: flex; flex-direction: column; gap: 10px; }
.k-title { height: 29px; font-size: 17.6px; font-weight: 600; color: #344253; display: flex; align-items: center; gap: 5px; white-space: nowrap; }
.agent { height: 98px; flex: none; border: 1px solid #262c33; border-radius: 9px; background: #1e1f1f; padding: 8px 15px 0 13px; display: flex; color: #8e939e; }
.agent.on { background: #1e2228; border-color: #22405f; }
.cb { width: 19px; height: 19px; margin: 30px 17px 0 0; border-radius: 3px; background: #f5f5f5; border: 2px solid #777; flex: none; }
.on .cb { background: #3f8be5; border: 0; }
.cb svg { display: block; width: 19px; height: 19px; }
.a-info { flex: 1; white-space: nowrap; }
.a-name { font-size: 20.6px; font-weight: 500; display: flex; height: 28px; align-items: center; }
.a-name span { width: 36px; font-size: 20px; }
.on .a-name { color: #4a8edd; }
.a-desc { font-size: 14px; line-height: 18px; height: 25px; color: #3b3f46; }
.on .a-desc { color: #5d6470; }
.a-sel { width: 133px; height: 24px; border: 1px solid #24292f; border-radius: 4px; font: 13.3px "Liberation Sans", sans-serif; display: flex; align-items: center; justify-content: space-between; padding: 0 5px 0 10px; color: #545960; }
.a-sel svg { width: 13px; height: 13px; }
.on .a-sel { background: #2f3339; border-color: #3a4a5c; color: #4a8edd; }
.a-state { margin-top: 30px; font-size: 15.5px; font-weight: 500; height: 20px; }
.presets, .output { border: 1px solid #1e2933; border-radius: 7px; padding: 9px 11px; color: #6b7280; font-size: 14.8px; }
.presets { height: 114px; margin-top: 6px; }
.presets b { line-height: 21px; }
.presets div { display: flex; flex-wrap: wrap; gap: 8px 7px; margin-top: 7px; }
.presets button { height: 28px; padding: 0 12px; background: #f3f3f3; color: #4a8edd; border-radius: 4px; font-size: 14.2px; }
.k-space { flex: 1; }
.k-bottom { padding: 0 21px; display: flex; flex-direction: column; }
.output { height: 67px; }
.output b { display: block; line-height: 24px; }
.output div { display: flex; align-items: center; height: 28px; font-size: 14.6px; color: #4a8edd; white-space: nowrap; }
.output span { width: 70px; padding-left: 5px; margin-right: 3px; }
.output span:nth-of-type(2) { width: 74px; }
.rd { width: 16px; height: 16px; border-radius: 50%; background: #f5f5f5; border: 1.5px solid #888; flex: none; }
.rd.sel { border: 2px solid #3f8be5; background: #3f8be5; box-shadow: inset 0 0 0 2px #fff; }
.area { position: relative; margin-top: 16px; height: 105px; border-radius: 9px; background: #f3f3f3; border: 1px solid #d4dbe4; color: #757575; font: 18.3px "Liberation Sans", sans-serif; padding: 16px; white-space: nowrap; }
.area svg { position: absolute; right: 2px; bottom: 2px; width: 10px; height: 10px; }
.exec { margin: 22px 0 21px; height: 53px; border-radius: 9px; background: #478bd9; color: #f5f5f5; font-size: 18.2px; }
.k-foot { border-top: 1px solid #20344c; height: 74px; flex: none; background: #1f2328; padding: 15px 21px; font-size: 15.4px; line-height: 20px; color: #6b7280; }

.taskbar { position: absolute; left: 0; right: 0; bottom: 0; height: 5px; display: flex; background: #292e32; padding-top: 2px; }
.taskbar i { flex: none; height: 3px; border-right: 1px solid #292e32; }
</style>
